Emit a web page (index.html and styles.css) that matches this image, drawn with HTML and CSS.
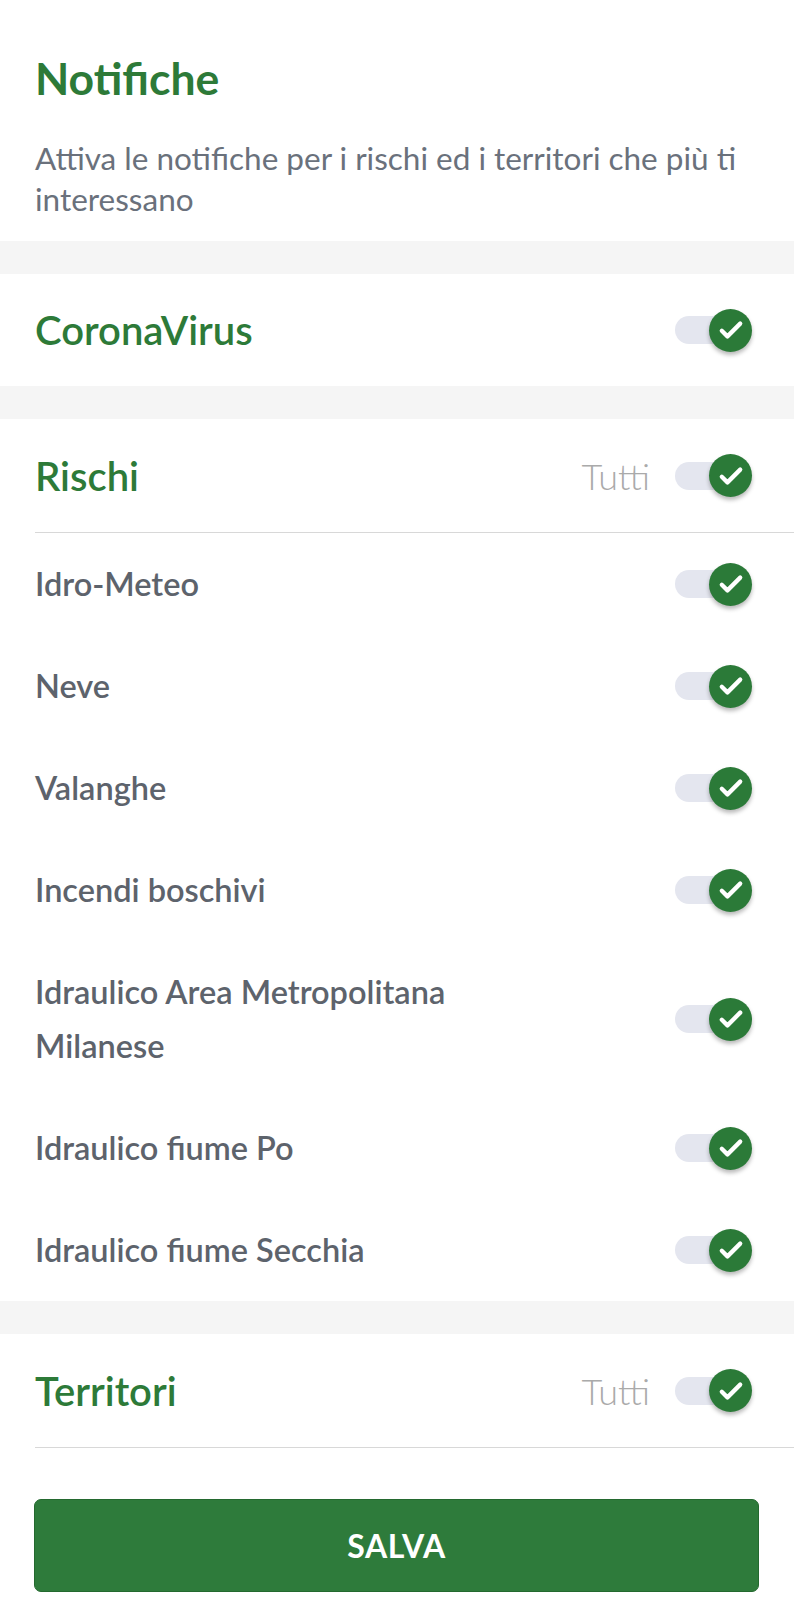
FILE: index.html
```html
<!DOCTYPE html>
<html lang="it">
<head>
<meta charset="utf-8">
<title>Notifiche</title>
<link rel="stylesheet" href="styles.css">
</head>
<body>
<div class="page">
  <header class="intro">
    <h1 class="title">Notifiche</h1>
    <p class="subtitle">Attiva le notifiche per i rischi ed i territori che più ti interessano</p>
  </header>

  <div class="band"></div>

  <section class="section">
    <div class="head">
      <h2 class="head-title">CoronaVirus</h2>
      <div class="controls">
        <span class="toggle"><span class="thumb"><svg viewBox="0 0 24 24"><path d="M5.5 12.5l4 4L18.5 7.5"/></svg></span></span>
      </div>
    </div>
  </section>

  <div class="band"></div>

  <section class="section">
    <div class="head divided">
      <h2 class="head-title">Rischi</h2>
      <div class="controls">
        <span class="all">Tutti</span>
        <span class="toggle"><span class="thumb"><svg viewBox="0 0 24 24"><path d="M5.5 12.5l4 4L18.5 7.5"/></svg></span></span>
      </div>
    </div>
    <div class="item"><span class="item-label">Idro-Meteo</span><span class="toggle"><span class="thumb"><svg viewBox="0 0 24 24"><path d="M5.5 12.5l4 4L18.5 7.5"/></svg></span></span></div>
    <div class="item"><span class="item-label">Neve</span><span class="toggle"><span class="thumb"><svg viewBox="0 0 24 24"><path d="M5.5 12.5l4 4L18.5 7.5"/></svg></span></span></div>
    <div class="item"><span class="item-label">Valanghe</span><span class="toggle"><span class="thumb"><svg viewBox="0 0 24 24"><path d="M5.5 12.5l4 4L18.5 7.5"/></svg></span></span></div>
    <div class="item"><span class="item-label">Incendi boschivi</span><span class="toggle"><span class="thumb"><svg viewBox="0 0 24 24"><path d="M5.5 12.5l4 4L18.5 7.5"/></svg></span></span></div>
    <div class="item"><span class="item-label">Idraulico Area Metropolitana Milanese</span><span class="toggle"><span class="thumb"><svg viewBox="0 0 24 24"><path d="M5.5 12.5l4 4L18.5 7.5"/></svg></span></span></div>
    <div class="item"><span class="item-label">Idraulico fiume Po</span><span class="toggle"><span class="thumb"><svg viewBox="0 0 24 24"><path d="M5.5 12.5l4 4L18.5 7.5"/></svg></span></span></div>
    <div class="item"><span class="item-label">Idraulico fiume Secchia</span><span class="toggle"><span class="thumb"><svg viewBox="0 0 24 24"><path d="M5.5 12.5l4 4L18.5 7.5"/></svg></span></span></div>
  </section>

  <div class="band"></div>

  <section class="section">
    <div class="head divided">
      <h2 class="head-title">Territori</h2>
      <div class="controls">
        <span class="all">Tutti</span>
        <span class="toggle"><span class="thumb"><svg viewBox="0 0 24 24"><path d="M5.5 12.5l4 4L18.5 7.5"/></svg></span></span>
      </div>
    </div>
  </section>

  <div class="actions">
    <button class="save" type="button">SALVA</button>
  </div>
</div>
</body>
</html>
```

FILE: styles.css
```css
* { box-sizing: border-box; }

html, body {
  margin: 0;
  padding: 0;
  background: #ffffff;
}

body {
  font-family: Lato, "Open Sans", sans-serif;
  width: 794px;
  min-height: 1600px;
}

.page {
  display: flex;
  flex-direction: column;
}

.intro {
  padding: 48px 42px 21px 35px;
}

.title {
  margin: 0;
  font-size: 44.5px;
  line-height: 60px;
  font-weight: 700;
  color: #2d7a38;
}

.subtitle {
  margin: 30px 0 0;
  font-size: 31.5px;
  line-height: 41px;
  font-weight: 400;
  color: #6a717c;
}

.band {
  height: 33px;
  background: #f5f5f5;
}

.section {
  padding-left: 35px;
  background: #ffffff;
}

.head {
  height: 112px;
  display: flex;
  align-items: center;
  justify-content: space-between;
  padding-right: 42px;
}

.head.divided {
  height: 114px;
  border-bottom: 1px solid #d8d8d8;
}

.head-title {
  margin: 0;
  font-size: 40px;
  font-weight: 600;
  color: #2d7a38;
}

.controls {
  display: flex;
  align-items: center;
  gap: 25px;
}

.all {
  font-size: 36px;
  color: #aaaaaa;
  font-weight: 300;
}

.item {
  display: flex;
  align-items: center;
  justify-content: space-between;
  padding: 24px 42px 24px 0;
  min-height: 102px;
}

.item-label {
  font-size: 32.5px;
  line-height: 54px;
  font-weight: 600;
  color: #5d636c;
  max-width: 460px;
}

.toggle {
  position: relative;
  flex: none;
  width: 77px;
  height: 43px;
  display: flex;
  align-items: center;
}

.toggle::before {
  content: "";
  display: block;
  width: 70px;
  height: 28px;
  border-radius: 14px;
  background: #e4e6ef;
}

.thumb {
  position: absolute;
  right: 0;
  top: 0;
  width: 43px;
  height: 43px;
  border-radius: 50%;
  background: #2b7a38;
  box-shadow: 0 3px 4px rgba(0, 0, 0, 0.28);
  display: flex;
  align-items: center;
  justify-content: center;
}

.thumb svg {
  width: 34px;
  height: 34px;
  fill: none;
  stroke: #ffffff;
  stroke-width: 3;
  stroke-linecap: round;
  stroke-linejoin: round;
}

.actions {
  padding: 51px 35px 0 34px;
}

.save {
  display: block;
  width: 100%;
  height: 93px;
  border: 1px solid #24692f;
  border-radius: 7px;
  background: #2e7b3b;
  color: #ffffff;
  font-family: inherit;
  font-size: 32px;
  font-weight: 700;
  letter-spacing: 0.5px;
  cursor: pointer;
}
```
